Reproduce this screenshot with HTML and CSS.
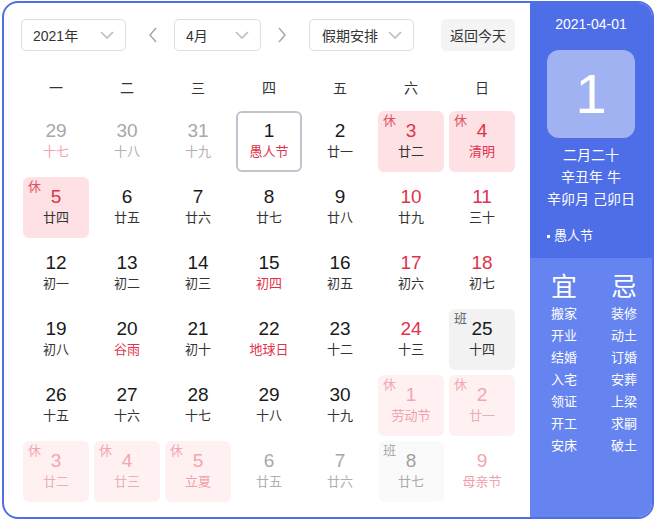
FILE: index.html
```html
<!DOCTYPE html>
<html lang="zh">
<head>
<meta charset="utf-8">
<title>万年历</title>
<link rel="stylesheet" href="styles.css">
</head>
<body>
<div class="app">
  <div class="main">
    <div class="toolbar">
      <div class="select sel-year"><span>2021年</span><svg class="chev" width="14" height="8" viewBox="0 0 14 8"><polyline points="1,1 7,7 13,1"/></svg></div>
      <div class="arrow prev"><svg width="10" height="16" viewBox="0 0 10 16"><polyline points="8,1 2,8 8,15"/></svg></div>
      <div class="select sel-month"><span>4月</span><svg class="chev" width="14" height="8" viewBox="0 0 14 8"><polyline points="1,1 7,7 13,1"/></svg></div>
      <div class="arrow next"><svg width="10" height="16" viewBox="0 0 10 16"><polyline points="2,1 8,8 2,15"/></svg></div>
      <div class="select sel-holiday"><span>假期安排</span><svg class="chev" width="14" height="8" viewBox="0 0 14 8"><polyline points="1,1 7,7 13,1"/></svg></div>
      <div class="btn-today">返回今天</div>
    </div>
    <div class="weekdays">
      <span>一</span><span>二</span><span>三</span><span>四</span><span>五</span><span>六</span><span>日</span>
    </div>
    <div class="grid">
      <div class="cell other"><b>29</b><i class="pink">十七</i></div>
      <div class="cell other"><b>30</b><i>十八</i></div>
      <div class="cell other"><b>31</b><i>十九</i></div>
      <div class="cell selected"><b>1</b><i class="fest">愚人节</i></div>
      <div class="cell"><b>2</b><i>廿一</i></div>
      <div class="cell rest"><em>休</em><b>3</b><i>廿二</i></div>
      <div class="cell rest"><em>休</em><b>4</b><i class="fest">清明</i></div>

      <div class="cell rest"><em>休</em><b>5</b><i>廿四</i></div>
      <div class="cell"><b>6</b><i>廿五</i></div>
      <div class="cell"><b>7</b><i>廿六</i></div>
      <div class="cell"><b>8</b><i>廿七</i></div>
      <div class="cell"><b>9</b><i>廿八</i></div>
      <div class="cell weekend"><b>10</b><i>廿九</i></div>
      <div class="cell weekend"><b>11</b><i>三十</i></div>

      <div class="cell"><b>12</b><i>初一</i></div>
      <div class="cell"><b>13</b><i>初二</i></div>
      <div class="cell"><b>14</b><i>初三</i></div>
      <div class="cell"><b>15</b><i class="fest">初四</i></div>
      <div class="cell"><b>16</b><i>初五</i></div>
      <div class="cell weekend"><b>17</b><i>初六</i></div>
      <div class="cell weekend"><b>18</b><i>初七</i></div>

      <div class="cell"><b>19</b><i>初八</i></div>
      <div class="cell"><b>20</b><i class="fest">谷雨</i></div>
      <div class="cell"><b>21</b><i>初十</i></div>
      <div class="cell"><b>22</b><i class="fest">地球日</i></div>
      <div class="cell"><b>23</b><i>十二</i></div>
      <div class="cell weekend"><b>24</b><i>十三</i></div>
      <div class="cell work"><em>班</em><b>25</b><i>十四</i></div>

      <div class="cell"><b>26</b><i>十五</i></div>
      <div class="cell"><b>27</b><i>十六</i></div>
      <div class="cell"><b>28</b><i>十七</i></div>
      <div class="cell"><b>29</b><i>十八</i></div>
      <div class="cell"><b>30</b><i>十九</i></div>
      <div class="cell rest pale"><em>休</em><b>1</b><i class="fest">劳动节</i></div>
      <div class="cell rest pale"><em>休</em><b>2</b><i>廿一</i></div>

      <div class="cell rest pale"><em>休</em><b>3</b><i>廿二</i></div>
      <div class="cell rest pale"><em>休</em><b>4</b><i>廿三</i></div>
      <div class="cell rest pale"><em>休</em><b>5</b><i class="fest">立夏</i></div>
      <div class="cell other"><b>6</b><i>廿五</i></div>
      <div class="cell other"><b>7</b><i>廿六</i></div>
      <div class="cell work pale"><em>班</em><b>8</b><i>廿七</i></div>
      <div class="cell other weekend-pale"><b>9</b><i class="fest">母亲节</i></div>
    </div>
  </div>
  <div class="side">
    <div class="side-top">
      <div class="date">2021-04-01</div>
      <div class="bigday">1</div>
      <div class="lunar">
        <div>二月二十</div>
        <div>辛丑年 牛</div>
        <div>辛卯月 己卯日</div>
      </div>
      <div class="festival"><span class="dot"></span>愚人节</div>
    </div>
    <div class="side-bottom">
      <div class="col">
        <div class="head">宜</div>
        <div>搬家</div><div>开业</div><div>结婚</div><div>入宅</div><div>领证</div><div>开工</div><div>安床</div>
      </div>
      <div class="col">
        <div class="head">忌</div>
        <div>装修</div><div>动土</div><div>订婚</div><div>安葬</div><div>上梁</div><div>求嗣</div><div>破土</div>
      </div>
    </div>
  </div>
</div>
</body>
</html>
```
FILE: styles.css
```css
* { box-sizing: border-box; }
html, body { margin: 0; padding: 0; background: #fff; }
body {
  font-family: "Liberation Sans", "Noto Sans CJK SC", sans-serif;
  color: #333;
}
.app {
  margin: 1px 0 0 2px;
  width: 652px;
  height: 518px;
  border: 2px solid #4e6ee8;
  border-radius: 16px;
  overflow: hidden;
  display: flex;
  background: #fff;
}
.main {
  width: 526px;
  padding: 16px 0 0 17px;
}
.toolbar {
  display: flex;
  align-items: center;
  height: 32px;
}
.select {
  height: 32px;
  border: 1px solid #dcdfe6;
  border-radius: 5px;
  display: flex;
  align-items: center;
  justify-content: space-between;
  padding: 0 11px 0 11px;
  font-size: 14px;
  color: #333;
}
.sel-year { width: 105px; }
.sel-month { width: 87px; }
.sel-holiday { width: 105px; padding-left: 12px; }
.chev polyline {
  fill: none;
  stroke: #b8bcc4;
  stroke-width: 1.6;
}
.arrow { width: 12px; display: flex; justify-content: center; }
.arrow polyline { fill: none; stroke: #a8abb2; stroke-width: 1.6; }
.prev { margin: 0 15px 0 21px; }
.next { margin: 0 21px 0 15px; }
.btn-today {
  margin-left: 27px;
  width: 74px;
  height: 32px;
  background: #f4f4f5;
  border-radius: 5px;
  display: flex;
  align-items: center;
  justify-content: center;
  font-size: 14px;
  color: #333;
}
.weekdays {
  margin: 27px 0 0 2px;
  display: grid;
  grid-template-columns: repeat(7, 66px);
  column-gap: 5px;
  height: 20px;
  line-height: 20px;
  font-size: 14px;
  color: #333;
  text-align: center;
}
.grid {
  margin: 13px 0 0 2px;
  display: grid;
  grid-template-columns: repeat(7, 66px);
  grid-auto-rows: 61px;
  gap: 5px;
}
.cell {
  position: relative;
  border-radius: 6px;
  display: flex;
  flex-direction: column;
  align-items: center;
  padding-top: 9px;
}
.cell b {
  font-weight: normal;
  font-size: 19px;
  line-height: 22px;
  color: #1a1a1a;
}
.cell i {
  font-style: normal;
  font-size: 13px;
  line-height: 20px;
  color: #333;
}
.cell em {
  position: absolute;
  left: 5px;
  top: 2px;
  font-style: normal;
  font-size: 13px;
  line-height: 16px;
}
.cell i.fest { color: #e0324a; }
.weekend b { color: #e0324a; }
.other b { color: #a8a8a8; }
.other i { color: #b0b0b0; }
.other i.pink { color: #f0a3ab; }
.selected { border: 2px solid #c0c4cc; padding-top: 7px; }
.rest { background: #fde1e4; }
.rest b { color: #e0324a; }
.rest em { color: #e2505e; }
.work { background: #f2f2f3; }
.work em { color: #666; }
.rest.pale { background: #fff0f1; }
.rest.pale b { color: #f2a6ae; }
.rest.pale i { color: #e8b0b5; }
.rest.pale i.fest { color: #f2a0a9; }
.rest.pale em { color: #f2a6ae; }
.work.pale { background: #fafafa; }
.work.pale b { color: #a0a0a0; }
.work.pale i { color: #aaa; }
.work.pale em { color: #aaa; }
.weekend-pale b { color: #f2a6ae; }
.other i.fest { color: #f2a0a9; }

.side {
  width: 122px;
  display: flex;
  flex-direction: column;
  color: #fff;
}
.side-top {
  background: #4e6ee8;
  height: 255px;
  padding-top: 11px;
  display: flex;
  flex-direction: column;
  align-items: center;
}
.date {
  font-size: 14px;
  line-height: 20px;
}
.bigday {
  margin-top: 16px;
  width: 88px;
  height: 88px;
  border-radius: 12px;
  background: rgba(255, 255, 255, 0.47);
  display: flex;
  align-items: center;
  justify-content: center;
  font-size: 56px;
  line-height: 1;
}
.lunar {
  margin-top: 6px;
  font-size: 14px;
  line-height: 22px;
  text-align: center;
}
.festival {
  margin-top: 16px;
  align-self: flex-start;
  padding-left: 17px;
  font-size: 13px;
  line-height: 20px;
  display: flex;
  align-items: center;
}
.dot {
  width: 3px;
  height: 3px;
  background: #fff;
  margin-right: 4px;
}
.side-bottom {
  flex: 1;
  background: #6584ef;
  padding: 14px 0 0 8px;
  display: flex;
  gap: 8px;
}
.col {
  width: 52px;
  text-align: center;
  font-size: 13px;
  line-height: 22px;
}
.col .head {
  font-size: 26px;
  line-height: 30px;
  margin-bottom: 1px;
}
```
